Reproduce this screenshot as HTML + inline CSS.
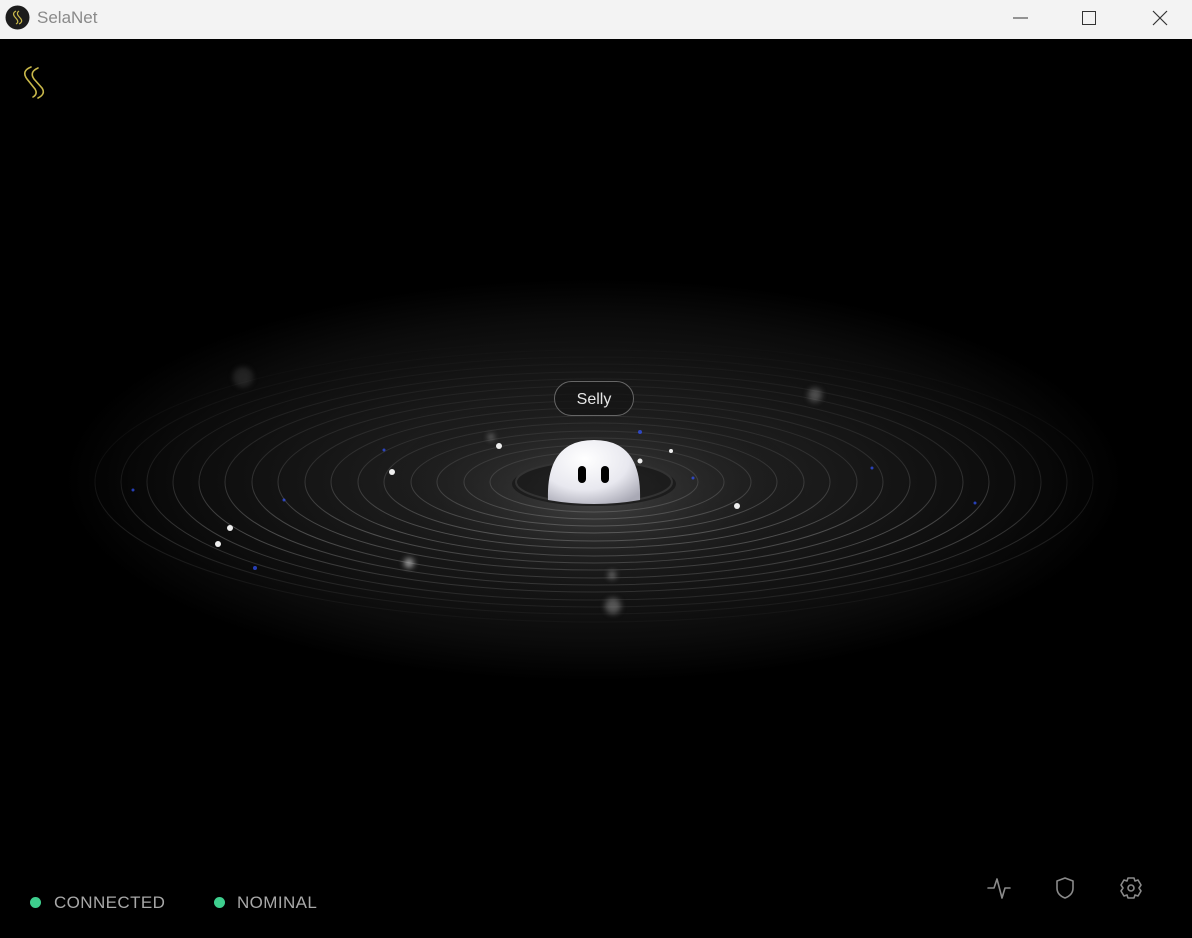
<!DOCTYPE html>
<html><head><meta charset="utf-8"><style>
html,body{margin:0;padding:0;width:1192px;height:938px;overflow:hidden;background:#000;font-family:"Liberation Sans","DejaVu Sans",sans-serif}
.tb{position:absolute;left:0;top:0;width:1192px;height:39px;background:#f3f3f3}
.tb .t{position:absolute;left:37px;top:8px;font-size:17px;color:#8a8a8a}
.pill{position:absolute;left:554px;top:381px;width:80px;height:35px;border:1px solid #666;border-radius:18px;background:rgba(20,20,20,.7);color:#e6e6e6;font-size:16px;text-align:center;line-height:35px;box-sizing:border-box}
.st{position:absolute;top:893px;font-size:17px;letter-spacing:.4px;color:#a8a8a8}
.dot{position:absolute;top:897px;width:11px;height:11px;border-radius:50%;background:#3ecf8e}
</style></head><body>
<div class="tb">
<svg style="position:absolute;left:5px;top:5px" width="25" height="25" viewBox="0 0 25 25"><circle cx="12.5" cy="12.5" r="12" fill="#1c1c1c"/><path d="M11 6 Q7 8 9.5 11.5 L12 14.5 Q14 17.5 11 19 M14 6 Q11 8 13.5 11 L16 14 Q18 17 14 19" stroke="#c9b84a" stroke-width="1.2" fill="none"/></svg>
<div class="t">SelaNet</div>
<svg style="position:absolute;left:1010px;top:8px" width="160" height="20"><line x1="3" y1="10" x2="18" y2="10" stroke="#333" stroke-width="1"/><rect x="72.5" y="3.5" width="13" height="13" fill="none" stroke="#333"/><path d="M143 3 L157 17 M157 3 L143 17" stroke="#333" stroke-width="1.2"/></svg>
</div>
<svg style="position:absolute;left:0;top:39px" width="1192" height="899" viewBox="0 39 1192 899">
<defs>
<radialGradient id="g" cx="594" cy="480" r="530" gradientUnits="userSpaceOnUse" gradientTransform="translate(0 480) scale(1 .38) translate(0 -480)">
<stop offset="0" stop-color="#333"/><stop offset=".35" stop-color="#1d1d1d"/><stop offset=".8" stop-color="#0b0b0b"/><stop offset="1" stop-color="#000"/></radialGradient>
<radialGradient id="g2" cx="594" cy="500" r="220" gradientUnits="userSpaceOnUse" gradientTransform="translate(0 500) scale(1 .5) translate(0 -500)">
<stop offset="0" stop-color="#555" stop-opacity=".5"/><stop offset="1" stop-color="#000" stop-opacity="0"/></radialGradient>
<linearGradient id="rs" x1="0" y1="340" x2="0" y2="640" gradientUnits="userSpaceOnUse">
<stop offset="0" stop-color="#777" stop-opacity=".03"/><stop offset=".4" stop-color="#777" stop-opacity=".25"/><stop offset=".65" stop-color="#888" stop-opacity=".5"/><stop offset="1" stop-color="#666" stop-opacity=".1"/></linearGradient>
<radialGradient id="b" cx=".4" cy=".3" r=".8"><stop offset="0" stop-color="#fff"/><stop offset=".6" stop-color="#e8e8ef"/><stop offset="1" stop-color="#a9a9b5"/></radialGradient>
<filter id="bl"><feGaussianBlur stdDeviation="3"/></filter>
</defs>
<rect x="0" y="39" width="1192" height="899" fill="#000"/>
<ellipse cx="594" cy="475" rx="540" ry="210" fill="url(#g)"/>
<ellipse cx="594" cy="500" rx="240" ry="110" fill="url(#g2)"/>
<ellipse cx="594" cy="484" rx="82" ry="22" fill="#111" opacity=".6"/>
<g fill="none" stroke="url(#rs)" stroke-width="1">
<ellipse cx="594" cy="482" rx="78" ry="21" stroke="#333" stroke-width="2"/>
<ellipse cx="594" cy="482" rx="104" ry="30"/>
<ellipse cx="594" cy="482" rx="130" ry="37"/>
<ellipse cx="594" cy="482" rx="157" ry="44"/>
<ellipse cx="594" cy="482" rx="183" ry="51"/>
<ellipse cx="594" cy="482" rx="210" ry="59"/>
<ellipse cx="594" cy="482" rx="236" ry="66"/>
<ellipse cx="594" cy="482" rx="263" ry="74"/>
<ellipse cx="594" cy="482" rx="289" ry="81"/>
<ellipse cx="594" cy="482" rx="316" ry="88"/>
<ellipse cx="594" cy="482" rx="342" ry="96"/>
<ellipse cx="594" cy="482" rx="369" ry="103"/>
<ellipse cx="594" cy="482" rx="395" ry="110"/>
<ellipse cx="594" cy="482" rx="421" ry="118" opacity=".85"/>
<ellipse cx="594" cy="482" rx="447" ry="125" opacity=".7"/>
<ellipse cx="594" cy="482" rx="473" ry="132" opacity=".55"/>
<ellipse cx="594" cy="482" rx="499" ry="140" opacity=".4"/>
</g>
<g fill="#3355ff" opacity=".7"><circle cx="133" cy="490" r="1.5"/><circle cx="384" cy="450" r="1.5"/><circle cx="284" cy="500" r="1.5"/><circle cx="640" cy="432" r="2"/><circle cx="872" cy="468" r="1.5"/><circle cx="975" cy="503" r="1.5"/><circle cx="693" cy="478" r="1.5"/><circle cx="255" cy="568" r="2"/></g>
<g fill="#eee"><circle cx="392" cy="472" r="3"/><circle cx="230" cy="528" r="3"/><circle cx="218" cy="544" r="3"/><circle cx="499" cy="446" r="3"/><circle cx="640" cy="461" r="2.5"/><circle cx="737" cy="506" r="3"/><circle cx="671" cy="451" r="2"/></g>
<g fill="#bbb" filter="url(#bl)"><circle cx="409" cy="563" r="5" opacity=".8"/><circle cx="612" cy="575" r="4" opacity=".5"/><circle cx="613" cy="606" r="8" opacity=".4"/><circle cx="815" cy="395" r="7" opacity=".35"/><circle cx="243" cy="377" r="10" opacity=".15"/><circle cx="491" cy="437" r="3" opacity=".6"/></g>
<path d="M548 500 Q546 440 594 440 Q642 440 640 500 Q594 508 548 500Z" fill="url(#b)"/>
<rect x="578" y="466" width="8" height="17" rx="4" fill="#000"/>
<rect x="601" y="466" width="8" height="17" rx="4" fill="#000"/>
<g stroke="#c9b84a" stroke-width="1.6" fill="none" stroke-linecap="round">
<path d="M31 67 Q21 71 27 79 L35 89 Q38 94 33 97"/>
<path d="M38 68 Q29 72 34 79 L42 88 Q46 94 38 98"/>
</g>
<g fill="none" stroke="#8a8a8a" stroke-width="1.6" stroke-linejoin="round" stroke-linecap="round">
<path d="M988 888 L994 888 L997 879 L1002 898 L1005 888 L1010 888"/>
<path d="M1065 878 L1073 881 L1073 888 Q1073 895 1065 898 Q1057 895 1057 888 L1057 881 Z"/>
<circle cx="1131" cy="888" r="3"/>
<path d="M1128 878 L1134 878 L1135 881 L1138 880 L1141 885 L1139 888 L1141 891 L1138 896 L1135 895 L1134 898 L1128 898 L1127 895 L1124 896 L1121 891 L1123 888 L1121 885 L1124 880 L1127 881 Z"/>
</g>
</svg>
<div class="pill">Selly</div>
<div class="dot" style="left:30px"></div><div class="st" style="left:54px">CONNECTED</div>
<div class="dot" style="left:214px"></div><div class="st" style="left:237px">NOMINAL</div>
</body></html>
